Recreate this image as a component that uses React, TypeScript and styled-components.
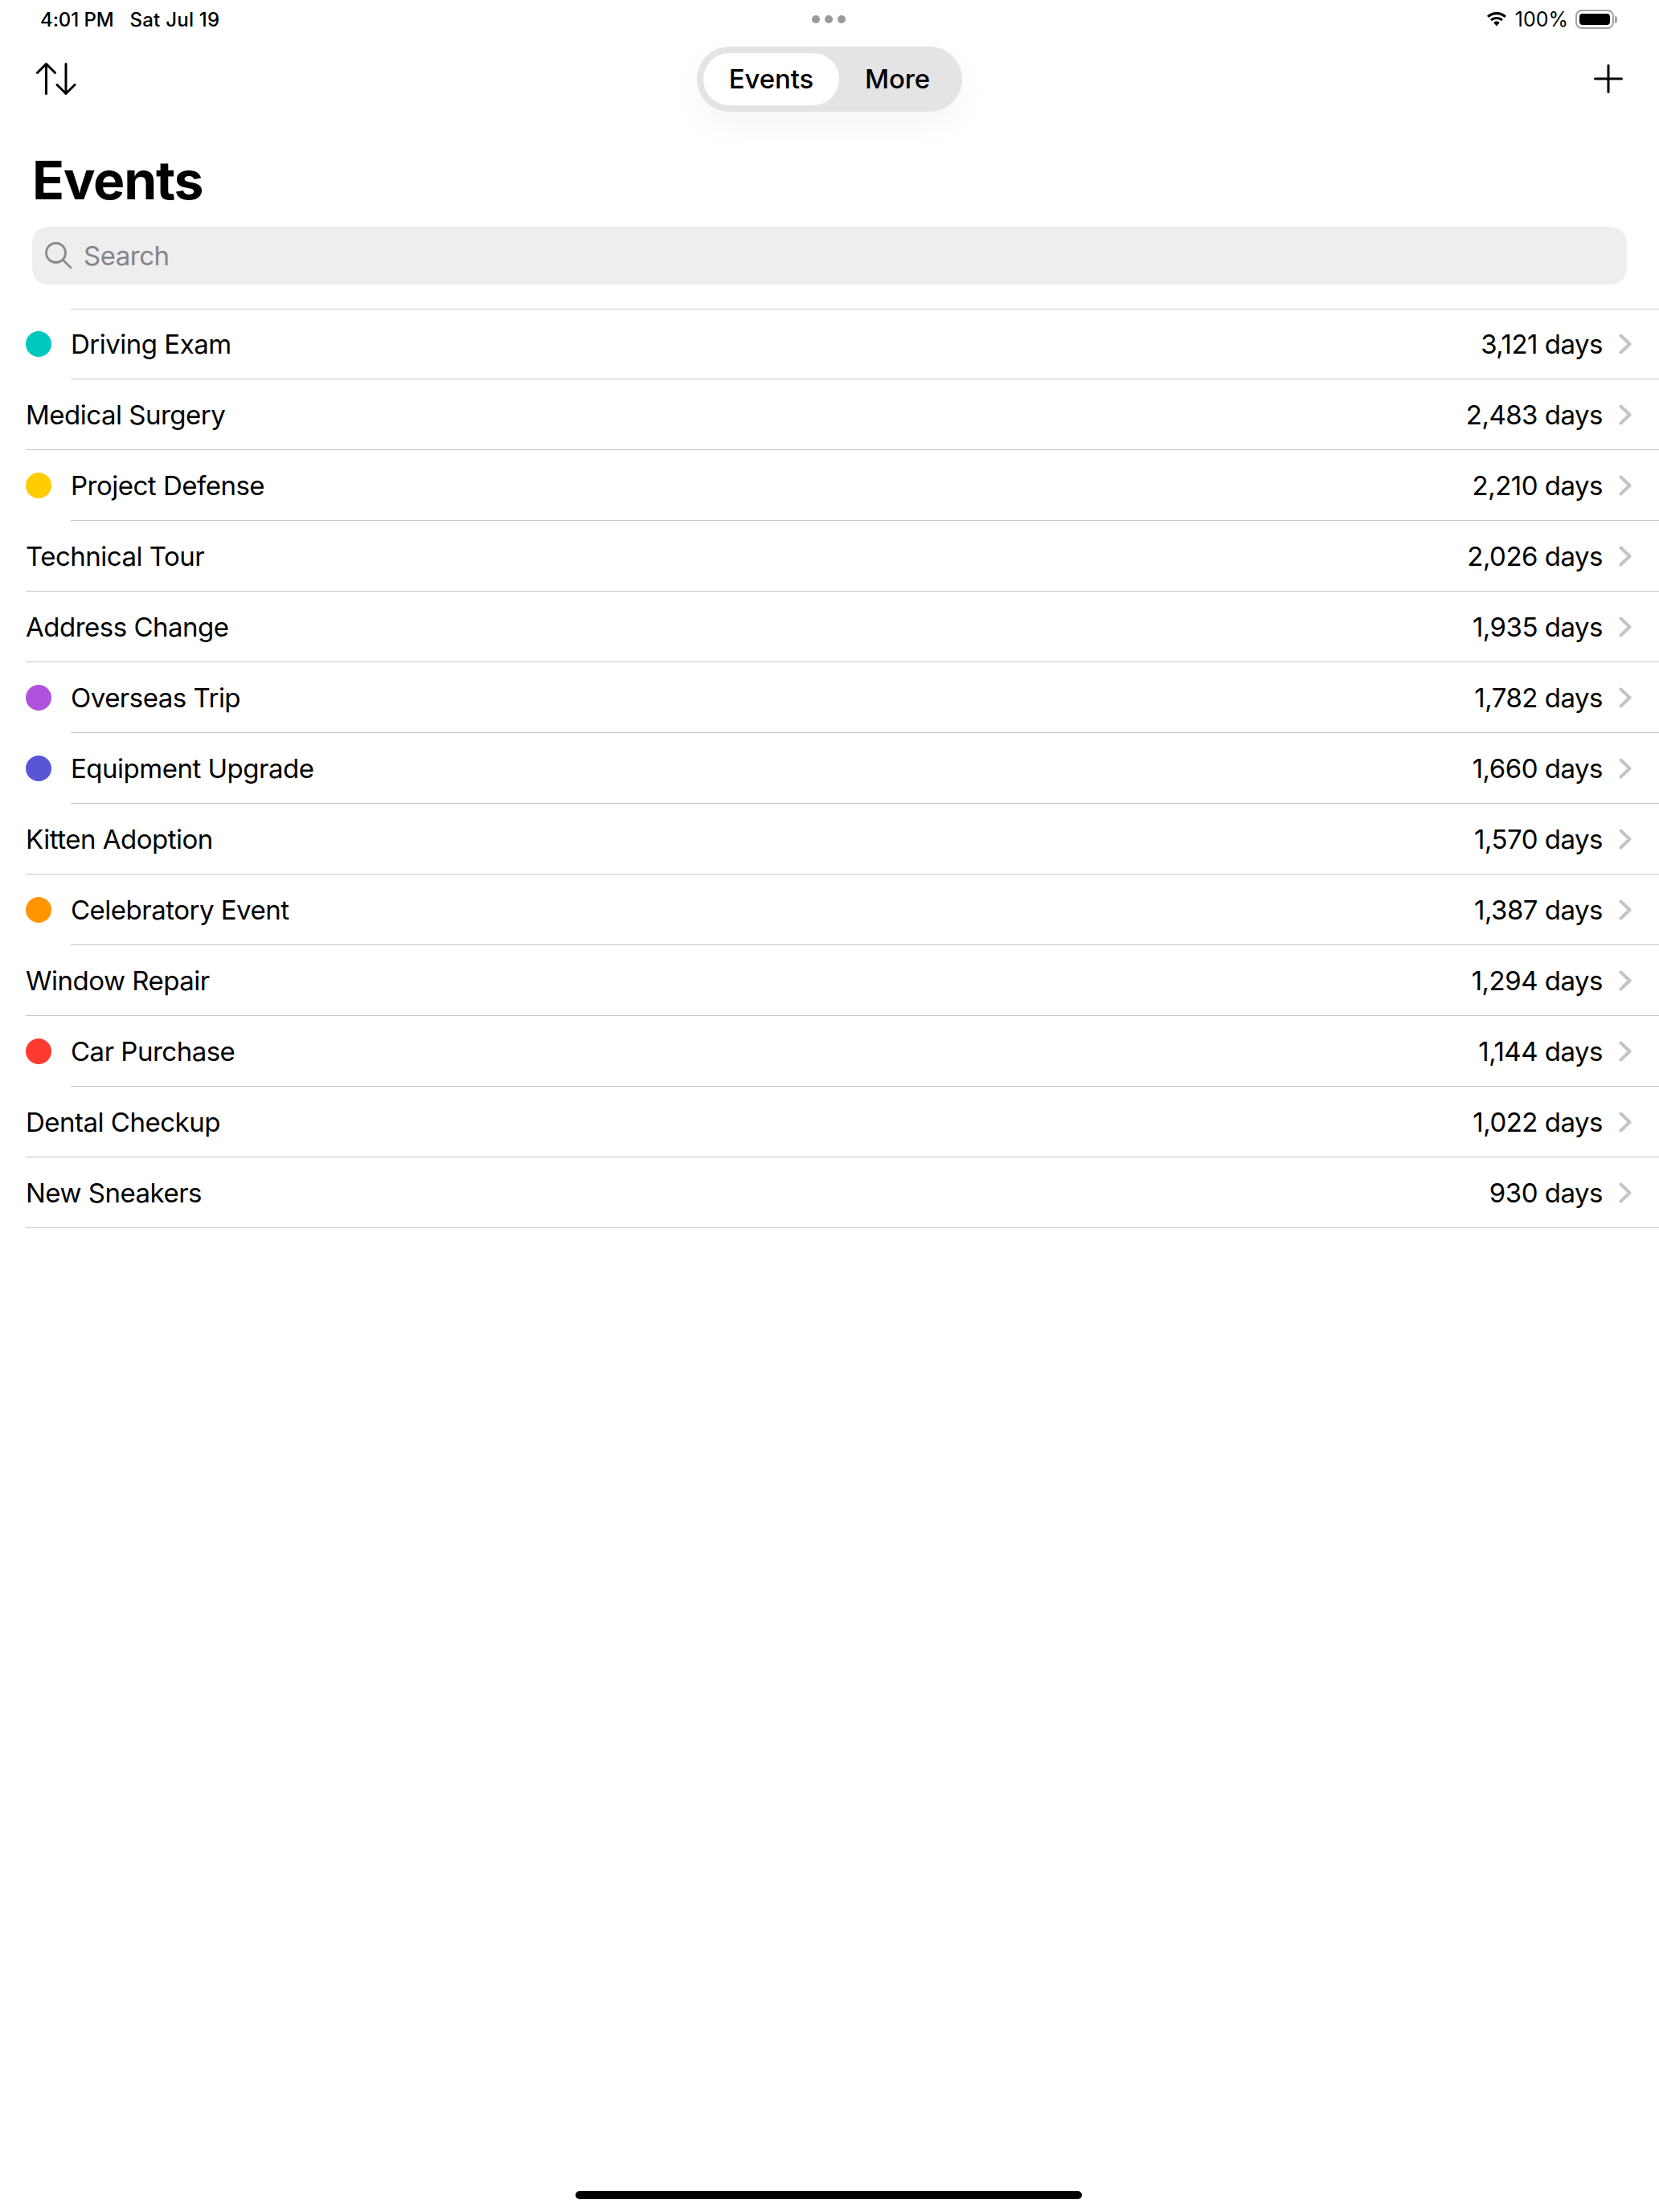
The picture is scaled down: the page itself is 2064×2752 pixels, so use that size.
import React from "react";
import styled, { createGlobalStyle } from "styled-components";

const events = [
  { name: "Driving Exam", days: "3,121", color: "#00c7be" },
  { name: "Medical Surgery", days: "2,483" },
  { name: "Project Defense", days: "2,210", color: "#ffcc00" },
  { name: "Technical Tour", days: "2,026" },
  { name: "Address Change", days: "1,935" },
  { name: "Overseas Trip", days: "1,782", color: "#af52de" },
  { name: "Equipment Upgrade", days: "1,660", color: "#5856d6" },
  { name: "Kitten Adoption", days: "1,570" },
  { name: "Celebratory Event", days: "1,387", color: "#ff9500" },
  { name: "Window Repair", days: "1,294" },
  { name: "Car Purchase", days: "1,144", color: "#ff3b30" },
  { name: "Dental Checkup", days: "1,022" },
  { name: "New Sneakers", days: "930" },
];

export default function App() {
  return (
    <Page>
      <GlobalStyle />
      <StatusBar>
        <StatusLeft>
          <span>4:01 PM</span>
          <DateText>Sat Jul 19</DateText>
        </StatusLeft>
        <Dots>
          <Dot />
          <Dot />
          <Dot />
        </Dots>
        <StatusRight>
          <svg width="28" height="20" viewBox="0 0 28 20">
            <path d="M14 4.200c3.800 0 7.200 1.500 9.800 3.900l2.200-2.300C22.800 2.800 18.600 1 14 1S5.200 2.800 2 5.800l2.200 2.300C6.800 5.700 10.200 4.200 14 4.200z" fill="#000" />
            <path d="M14 9.900c2.300 0 4.300.9 5.900 2.300l2.100-2.200c-2.100-1.900-4.900-3.100-8-3.100s-5.900 1.200-8 3.100l2.100 2.200c1.600-1.400 3.600-2.300 5.900-2.300z" fill="#000" />
            <path d="M14 12.500c-1.500 0-2.800.6-3.800 1.500L14 18.500l3.800-4.500c-1-.9-2.300-1.500-3.800-1.500z" fill="#000" />
          </svg>
          <BatteryText>100%</BatteryText>
          <Battery>
            <BatteryFill />
          </Battery>
          <BatteryNub />
        </StatusRight>
      </StatusBar>

      <Toolbar>
        <ToolButton>
          <svg width="50" height="40" viewBox="0 0 50 40" fill="none" stroke="#000" strokeWidth="3" strokeLinecap="round" strokeLinejoin="round">
            <path d="M12.500 38.500V1.500M1.500 12.500l11-11 11 11" />
            <path d="M37 1.500v37M26 27.500l11 11 11-11" />
          </svg>
        </ToolButton>
        <Segmented>
          <Segment $active>Events</Segment>
          <Segment>More</Segment>
        </Segmented>
        <PlusButton>
          <svg width="36" height="36" viewBox="0 0 36 36" fill="none" stroke="#000" strokeWidth="3" strokeLinecap="round">
            <path d="M18 1.500v33M1.500 18h33" />
          </svg>
        </PlusButton>
      </Toolbar>

      <Title>Events</Title>

      <SearchBar>
        <svg width="34" height="34" viewBox="0 0 34 34" fill="none" stroke="#8a8a8e" strokeWidth="2.800" strokeLinecap="round">
          <circle cx="13.500" cy="13.500" r="12" />
          <path d="M22.500 22.500L32 32" />
        </svg>
        <SearchText>Search</SearchText>
      </SearchBar>

      <List>
        <TopRule />
        {events.map((event) => (
          <div key={event.name}>
            <Row>
              {event.color && <ColorDot $color={event.color} />}
              <Name>{event.name}</Name>
              <Days>{event.days} days</Days>
              <svg width="16" height="26" viewBox="0 0 16 26" fill="none" stroke="#c4c4c7" strokeWidth="4" strokeLinecap="round" strokeLinejoin="round">
                <path d="M2.500 2.500L13.500 13 2.500 23.500" />
              </svg>
            </Row>
            <Rule $inset={!!event.color} />
          </div>
        ))}
      </List>

      <HomeBar />
    </Page>
  );
}

const GlobalStyle = createGlobalStyle`
  html, body {
    margin: 0;
    padding: 0;
    background: #fff;
  }
  body {
    font-family: Inter, "Liberation Sans", sans-serif;
    color: #000;
  }
`;

const Page = styled.div`
  position: relative;
  width: 2064px;
  height: 2752px;
  overflow: hidden;
  background: #fff;
`;

const StatusBar = styled.div`
  display: grid;
  grid-template-columns: 1fr auto 1fr;
  align-items: center;
  height: 48px;
  padding: 0 52px 0 50px;
  font-size: 24px;
`;

const StatusLeft = styled.div`
  display: flex;
  gap: 20px;
  font-weight: 500;
  letter-spacing: -0.1px;
`;

const DateText = styled.span`
  letter-spacing: 0.25px;
`;

const Dots = styled.div`
  display: flex;
  gap: 6px;
`;

const Dot = styled.span`
  width: 10px;
  height: 10px;
  border-radius: 50%;
  background: #9a9a9a;
`;

const StatusRight = styled.div`
  display: flex;
  justify-content: flex-end;
  align-items: center;
`;

const BatteryText = styled.span`
  margin: 0 9px;
  font-size: 25px;
`;

const Battery = styled.div`
  box-sizing: border-box;
  width: 48px;
  height: 24px;
  padding: 3px;
  border: 2px solid #a3a3a3;
  border-radius: 8px;
`;

const BatteryFill = styled.div`
  height: 100%;
  border-radius: 4px;
  background: #000;
`;

const BatteryNub = styled.div`
  width: 3px;
  height: 9px;
  margin-left: 1px;
  border-radius: 0 3px 3px 0;
  background: #a3a3a3;
`;

const Toolbar = styled.div`
  display: grid;
  grid-template-columns: 1fr auto 1fr;
  align-items: center;
  height: 100px;
  padding: 0 45px;
`;

const ToolButton = styled.div`
  display: flex;
  justify-content: flex-start;
`;

const PlusButton = styled.div`
  display: flex;
  justify-content: flex-end;
`;

const Segmented = styled.div`
  display: flex;
  box-sizing: border-box;
  width: 330px;
  height: 81px;
  padding: 8px;
  border-radius: 41px;
  background: #e4e4e7;
  box-shadow: 0 16px 44px rgba(0, 0, 0, 0.04);
`;

const Segment = styled.div<{ $active?: boolean }>`
  display: flex;
  align-items: center;
  justify-content: center;
  flex: ${(p) => (p.$active ? "0 0 169px" : "1")};
  border-radius: 33px;
  background: ${(p) => (p.$active ? "#fff" : "transparent")};
  font-size: 33px;
  font-weight: 500;
  letter-spacing: -0.1px;
`;

const Title = styled.h1`
  margin: 0;
  padding: 35px 0 0 40px;
  height: 99px;
  font-size: 66px;
  line-height: 82px;
  font-weight: 700;
  letter-spacing: -1.2px;
`;

const SearchBar = styled.div`
  display: flex;
  align-items: center;
  gap: 14px;
  box-sizing: border-box;
  height: 72px;
  margin: 0 40px;
  padding: 0 16px;
  border-radius: 20px;
  background: #eeeeef;
`;

const SearchText = styled.span`
  font-size: 33px;
  letter-spacing: -0.5px;
  color: #85858a;
`;

const List = styled.div`
  margin-top: 30px;
  padding-left: 32px;
`;

const Row = styled.div`
  display: flex;
  align-items: center;
  height: 87px;
  padding-right: 34px;
  font-size: 33px;
  letter-spacing: -0.5px;
`;

const ColorDot = styled.span<{ $color: string }>`
  flex: none;
  width: 32px;
  height: 32px;
  margin-right: 24px;
  border-radius: 50%;
  background: ${(p) => p.$color};
`;

const Name = styled.span`
  flex: 1;
`;

const Days = styled.span`
  margin-right: 20px;
  letter-spacing: -0.5px;
`;

const Rule = styled.div<{ $inset?: boolean }>`
  height: 1px;
  margin-left: ${(p) => (p.$inset ? "56px" : "0")};
  background: #c6c6c8;
`;

const TopRule = styled(Rule).attrs({ $inset: true })`
  margin-bottom: -1px;
`;

const HomeBar = styled.div`
  position: absolute;
  left: 716px;
  bottom: 16px;
  width: 630px;
  height: 10px;
  border-radius: 5px;
  background: #000;
`;
